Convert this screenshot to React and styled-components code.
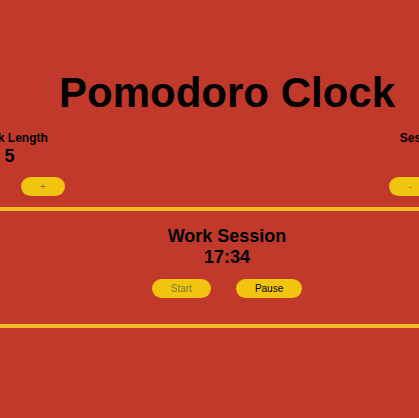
import React from "react";
import styled, { createGlobalStyle } from "styled-components";

const GlobalStyle = createGlobalStyle`
  body {
    margin: 0;
    background: #c0392b;
    color: #000;
    font-family: "Liberation Sans", Arial, sans-serif;
    overflow: hidden;
  }
`;

const Page = styled.main`
  min-height: 100vh;
  overflow: hidden;
  text-align: center;
`;

const Title = styled.h1`
  margin: 0;
  padding: 69px 0 13px 35px;
  font-size: 42px;
  line-height: 48px;
  white-space: nowrap;
`;

const Settings = styled.section`
  display: flex;
  justify-content: center;
  padding: 0 0 11px 35px;
`;

const Setting = styled.div`
  flex: 0 0 435px;
`;

const Label = styled.h2`
  margin: 0;
  font-size: 12px;
  line-height: 16px;
`;

const Value = styled.p`
  margin: 0;
  font-size: 18px;
  font-weight: bold;
  line-height: 20px;
`;

const Buttons = styled.div`
  display: flex;
  justify-content: center;
  gap: 25px;
  margin-top: ${({ $top }) => $top}px;
`;

const Button = styled.button`
  height: 19px;
  padding: 0 19px;
  border: 0;
  border-radius: 10px;
  background: #f1c40f;
  color: #000;
  font-family: inherit;
  font-size: 10px;
  line-height: 19px;

  &:disabled {
    color: #86783a;
  }
`;

const Timer = styled.section`
  padding: 15px 0 26px 35px;
  border: solid #f5b921;
  border-width: 4px 0;
`;

const Phase = styled.h2`
  margin: 0;
  font-size: 18px;
  line-height: 21px;
`;

function LengthSetting({ label, value }) {
  return (
    <Setting>
      <Label>{label}</Label>
      <Value>{value}</Value>
      <Buttons $top={11}>
        <Button disabled aria-label={`Decrease ${label}`}>-</Button>
        <Button disabled aria-label={`Increase ${label}`}>+</Button>
      </Buttons>
    </Setting>
  );
}

export default function App() {
  return (
    <Page>
      <GlobalStyle />
      <Title>Pomodoro Clock</Title>
      <Settings>
        <LengthSetting label="Break Length" value="5" />
        <LengthSetting label="Session Length" value="25" />
      </Settings>
      <Timer>
        <Phase>Work Session</Phase>
        <Value>17:34</Value>
        <Buttons $top={12}>
          <Button disabled>Start</Button>
          <Button>Pause</Button>
        </Buttons>
      </Timer>
    </Page>
  );
}
